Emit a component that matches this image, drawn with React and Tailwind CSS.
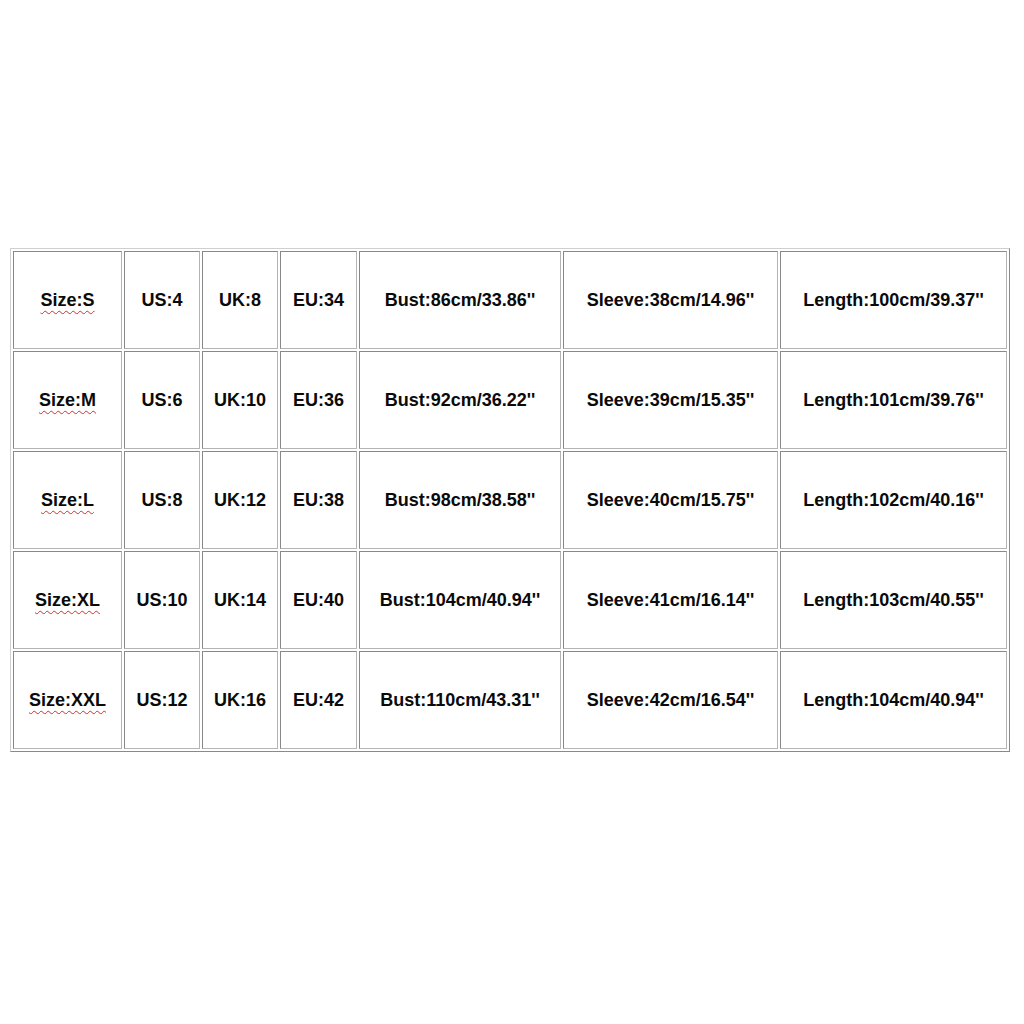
import React from "react";

const rows = [
  ["Size:S", "US:4", "UK:8", "EU:34", "Bust:86cm/33.86''", "Sleeve:38cm/14.96''", "Length:100cm/39.37''"],
  ["Size:M", "US:6", "UK:10", "EU:36", "Bust:92cm/36.22''", "Sleeve:39cm/15.35''", "Length:101cm/39.76''"],
  ["Size:L", "US:8", "UK:12", "EU:38", "Bust:98cm/38.58''", "Sleeve:40cm/15.75''", "Length:102cm/40.16''"],
  ["Size:XL", "US:10", "UK:14", "EU:40", "Bust:104cm/40.94''", "Sleeve:41cm/16.14''", "Length:103cm/40.55''"],
  ["Size:XXL", "US:12", "UK:16", "EU:42", "Bust:110cm/43.31''", "Sleeve:42cm/16.54''", "Length:104cm/40.94''"],
];

export default function App() {
  return (
    <div className="w-[1024px] h-[1024px] bg-white pt-[248px] pl-[10px]" style={{ fontFamily: '"Liberation Sans", Arial, sans-serif' }}>
      <div className="w-[1000px] border border-t-[#cfcfcf] border-l-[#cfcfcf] border-r-[#8a8a8a] border-b-[#8a8a8a] p-[2px]">
        <div className="grid grid-cols-[109px_76px_76px_77px_202px_215px_227px] auto-rows-[98px] gap-[2px]">
          {rows.map((row, ri) =>
            row.map((cell, ci) => (
              <div
                key={ri + "-" + ci}
                className="flex items-center justify-center border border-t-[#888888] border-l-[#888888] border-r-[#b4b4b4] border-b-[#b4b4b4] text-[18px] font-bold text-[#0a0a0a] whitespace-nowrap"
              >
                {ci === 0 ? (
                  <span className="underline decoration-wavy decoration-[#d03030] decoration-1 underline-offset-[4px]">{cell}</span>
                ) : (
                  <span>{cell}</span>
                )}
              </div>
            ))
          )}
        </div>
      </div>
    </div>
  );
}
